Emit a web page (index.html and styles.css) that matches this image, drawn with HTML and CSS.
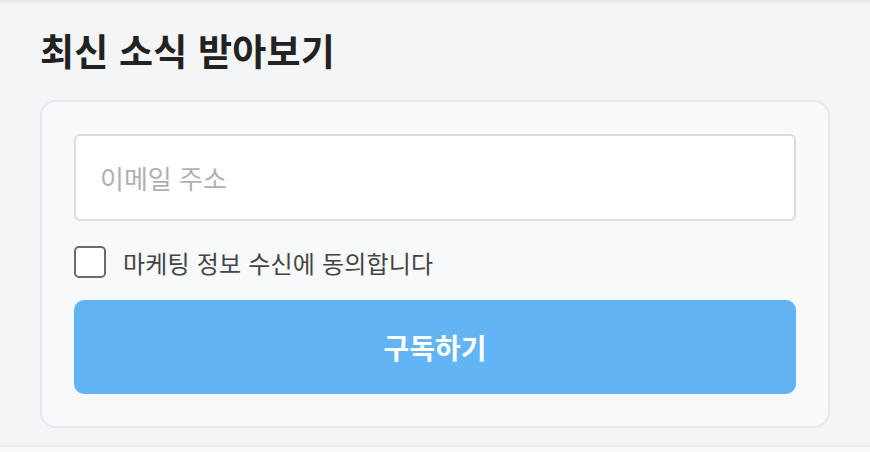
FILE: index.html
```html
<!DOCTYPE html>
<html lang="ko">
<head>
<meta charset="utf-8">
<link rel="stylesheet" href="styles.css">
</head>
<body>
<section class="newsletter">
  <h2 class="title">최신 소식 받아보기</h2>
  <form class="card">
    <input class="email" type="email" placeholder="이메일 주소">
    <label class="agree">
      <span class="box"></span>
      <span class="agree-text">마케팅 정보 수신에 동의합니다</span>
    </label>
    <button class="submit" type="button">구독하기</button>
  </form>
</section>
</body>
</html>
```
FILE: styles.css
```css
* { box-sizing: border-box; }
html, body { margin: 0; padding: 0; }
body {
  background: #f8f9fa;
  font-family: "Noto Sans CJK KR", "Noto Sans", sans-serif;
  width: 870px;
  height: 452px;
  overflow: hidden;
}
.newsletter {
  background: #f4f5f7;
  border-top: 3px solid #e9eaec;
  border-bottom: 2px solid #ebecee;
  padding: 22px 40px 17px 40px;
  height: 447px;
}
.title {
  margin: 0 0 25px 0;
  font-size: 37px;
  font-weight: 700;
  line-height: 50px;
  color: #222;
  letter-spacing: 0.2px;
}
.card {
  margin: 0;
  width: 790px;
  background: #f7f9fb;
  border: 2px solid #e4eaf0;
  border-radius: 16px;
  padding: 32px;
  display: flex;
  flex-direction: column;
}
.email {
  height: 87px;
  width: 100%;
  border: 2px solid #dcdcdc;
  border-radius: 6px;
  background: #fff;
  padding: 0 24px;
  font-family: inherit;
  font-size: 26px;
  color: #333;
  outline: none;
}
.email::placeholder { color: #b0b0b0; }
.agree {
  display: flex;
  align-items: center;
  gap: 17px;
  margin-top: 25px;
  height: 32px;
}
.box {
  width: 32px;
  height: 32px;
  border: 2px solid #6b6b6b;
  border-radius: 5px;
  background: #fff;
  flex: none;
}
.agree-text {
  font-size: 24px;
  color: #444;
  letter-spacing: 0.2px;
}
.submit {
  margin-top: 22px;
  height: 94px;
  width: 100%;
  border: none;
  border-radius: 10px;
  background: #63b4f4;
  color: #fff;
  font-family: inherit;
  font-size: 28px;
  font-weight: 700;
}
```
